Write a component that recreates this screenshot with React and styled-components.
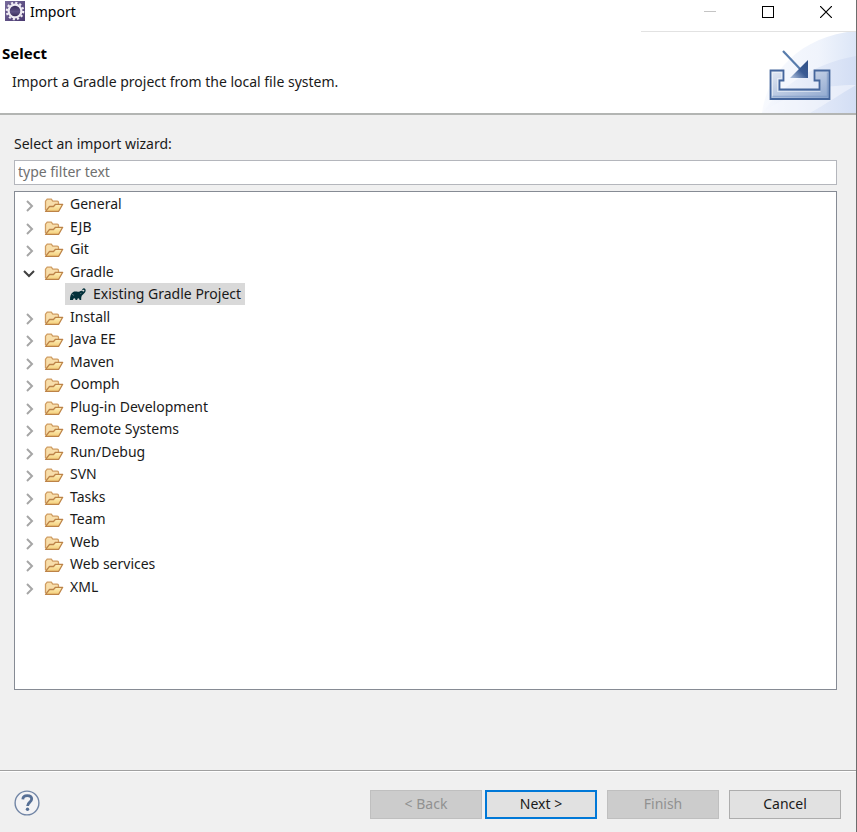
import React, { useState } from 'react';
import styled, { createGlobalStyle } from 'styled-components';

const GlobalStyle = createGlobalStyle`
  * {
    box-sizing: border-box;
  }

  body {
    margin: 0;
    background: #f0f0f0;
    color: #1a1a1a;
    font-family: 'Noto Sans', 'Noto Sans CJK KR', sans-serif;
    font-size: 14px;
    line-height: 22px;
  }

  button, input {
    font: inherit;
  }
`;

const Dialog = styled.div`
  display: flex;
  flex-direction: column;
  min-height: 100vh;
  border-right: 1px solid #6d6d6d;
`;

const TitleBar = styled.header`
  display: flex;
  align-items: flex-start;
  height: 31px;
  padding-left: 5px;
  background: #fff;
  color: #000;
`;

const WindowTitle = styled.span`
  flex: 1;
  margin-left: 5px;
  line-height: 24px;
`;

const WindowControls = styled.div`
  display: flex;
  height: 32px;
  padding: 0 1px 0 40px;
  border-bottom: 1px solid #e2e2e2;
  z-index: 1;
`;

const ControlButton = styled.button`
  width: 58px;
  padding: 0 0 7px;
  border: none;
  background: transparent;
  color: ${props => (props.disabled ? '#c4c4c4' : '#000')};

  svg {
    display: block;
    margin: 0 auto;
  }
`;

const Banner = styled.div`
  display: flex;
  justify-content: space-between;
  height: 84px;
  padding-left: 2px;
  border-bottom: 2px solid #b3b5b3;
  background: #fff;
`;

const BannerText = styled.div`
  padding-top: 10px;
`;

const BannerTitle = styled.h1`
  margin: 0;
  color: #000;
  font-size: 15px;
  font-weight: 700;
  line-height: 24px;
`;

const BannerMessage = styled.p`
  margin: 0;
  padding: 6px 0 0 10px;
`;

const Content = styled.main`
  display: flex;
  flex: 1;
  flex-direction: column;
  padding: 18px 19px 80px 14px;
`;

const FilterLabel = styled.label`
  margin-bottom: 5px;
`;

const FilterInput = styled.input`
  width: 100%;
  height: 25px;
  padding: 0 3px 2px;
  border: 1px solid #b4b6bc;
  border-radius: 0;
  outline: none;
  background: #fff;

  &::placeholder {
    color: #707070;
    opacity: 1;
  }
`;

const Tree = styled.ul`
  display: grid;
  flex: 1;
  grid-auto-rows: 22px 23px;
  align-content: start;
  margin: 6px 0 0;
  padding: 1px 0 0 7px;
  border: 1px solid #868b94;
  background: #fff;
  list-style: none;
`;

const TreeRow = styled.li`
  display: flex;
  align-items: center;
  padding-left: ${props => (props.$nested ? '43px' : '0')};
`;

const Toggle = styled.button`
  display: flex;
  align-items: center;
  justify-content: center;
  width: 14px;
  height: 20px;
  margin-right: 8px;
  padding: 4px 0 0;
  border: none;
  background: transparent;
`;

const ItemLabel = styled.span`
  display: flex;
  align-items: center;
  gap: ${props => (props.$selected ? '7px' : '6px')};
  padding: ${props => (props.$selected ? '0 4px' : '0')};
  background: ${props => (props.$selected ? '#d9d9d9' : 'transparent')};
`;

const Footer = styled.footer`
  display: flex;
  align-items: center;
  justify-content: space-between;
  height: 62px;
  padding: 6px 15px 0 14px;
  border-top: 1px solid #a0a0a0;
  box-shadow: inset 0 1px #fff;
`;

const HelpButton = styled.button`
  width: 26px;
  height: 30px;
  padding: 0 0 4px;
  border: none;
  background: transparent;

  svg {
    display: block;
  }
`;

const ButtonRow = styled.div`
  display: flex;
  gap: 10px;
`;

const ButtonPair = styled.div`
  display: flex;
  gap: 3px;
`;

const WizardButton = styled.button`
  width: 112px;
  height: 29px;
  padding: 0 0 2px;
  border: ${props => (props.$primary ? '2px solid #0078d7' : '1px solid #adadad')};
  background: #e1e1e1;
  color: #1a1a1a;

  &:disabled {
    border-color: #bfbfbf;
    background: #cccccc;
    color: #919191;
  }
`;

const EclipseIcon = () => (
  <svg width="20" height="22" viewBox="0 0 20 22">
    <defs>
      <linearGradient id="eclipseBg" x1="0" y1="0" x2="1" y2="1">
        <stop offset="0" stopColor="#776a9b" />
        <stop offset="1" stopColor="#493970" />
      </linearGradient>
      <linearGradient id="eclipseDisc" x1="0" y1="0" x2="0" y2="1">
        <stop offset="0" stopColor="#302451" />
        <stop offset="0.55" stopColor="#5d5184" />
        <stop offset="1" stopColor="#302451" />
      </linearGradient>
    </defs>
    <rect y="1" width="20" height="20" fill="url(#eclipseBg)" />
    <circle cx="10" cy="11" r="8.2" fill="none" stroke="#eeeaf2" strokeWidth="2.2" strokeDasharray="2.15 2.14" />
    <circle cx="10" cy="11" r="6.4" fill="url(#eclipseDisc)" stroke="#eeeaf2" strokeWidth="2.2" />
  </svg>
);

const ImportBannerIcon = () => (
  <svg width="94" height="82" viewBox="0 0 94 82" aria-hidden="true">
    <defs>
      <linearGradient id="swoosh" x1="0" y1="0" x2="1" y2="0">
        <stop offset="0" stopColor="#f7f9fe" />
        <stop offset="1" stopColor="#d3def4" />
      </linearGradient>
      <linearGradient id="swooshTop" x1="0" y1="0" x2="1" y2="0">
        <stop offset="0" stopColor="#f8fafe" />
        <stop offset="0.6" stopColor="#f0f4fc" />
        <stop offset="1" stopColor="#dce6f7" />
      </linearGradient>
      <linearGradient id="tray" x1="0" y1="0" x2="1" y2="1">
        <stop offset="0" stopColor="#e3e9f4" />
        <stop offset="0.5" stopColor="#b9c8e1" />
        <stop offset="1" stopColor="#8da6ce" />
      </linearGradient>
      <linearGradient id="arrowHead" x1="0" y1="1" x2="1" y2="0">
        <stop offset="0" stopColor="#b5c6e1" />
        <stop offset="0.5" stopColor="#3a5b94" />
        <stop offset="1" stopColor="#305087" />
      </linearGradient>
    </defs>
    <path d="M0 82C5 42 38 5 94 0V82Z" fill="url(#swooshTop)" />
    <path d="M0 82C17 58 48 33 94 25V82Z" fill="url(#swoosh)" />
    <path d="M0 82C30 60 62 54 94 54C80 62 64 73 48 82Z" fill="#f5f8fe" opacity="0.55" />
    <path
      d="M8.5 39.5h13v10h-4v9h40v-9h-5v-10h15v28.500h-59Z"
      fill="url(#tray)"
      stroke="#45669c"
      strokeWidth="1.8"
    />
    <path d="M10.500 65.500V41.500h9v6h-4v13h43" fill="none" stroke="#f5f7fb" strokeWidth="0.8" opacity="0.7" />
    <path d="M10.500 65.500h55v-24" fill="none" stroke="#6f8fc0" strokeWidth="1.4" opacity="0.5" />
    <path d="M21 20L40 40" fill="none" stroke="#587cac" strokeWidth="2.2" />
    <path d="M46 29V47H28Z" fill="url(#arrowHead)" />
  </svg>
);

const ChevronIcon = ({ open }) => (
  <svg width="12" height="12" viewBox="0 0 12 12">
    <path
      d={open ? 'M1 3L6 8L11 3' : 'M4 1L9 6L4 11'}
      fill="none"
      stroke={open ? '#404040' : '#a6a6a6'}
      strokeWidth="2"
    />
  </svg>
);

const FolderIcon = () => (
  <svg width="20" height="18" viewBox="0 0 20 18">
    <defs>
      <linearGradient id="folderFront" x1="0" y1="0" x2="0" y2="1">
        <stop offset="0" stopColor="#fff2bd" />
        <stop offset="1" stopColor="#f3cd78" />
      </linearGradient>
    </defs>
    <path
      d="M1.500 15V6.200L3.200 4.200H7.300L8.800 6.200H13.200Q14.500 6.200 14.500 7.500V9"
      fill="#f8deaa"
      stroke="#cf9c60"
      strokeWidth="1.3"
    />
    <path
      d="M1.500 16.300L5.500 11.500H9.500L11.500 9.300H18.700L14.700 16.300Z"
      fill="url(#folderFront)"
      stroke="#bd8347"
      strokeWidth="1.3"
      strokeLinejoin="round"
    />
  </svg>
);

const GradleIcon = () => (
  <svg width="17" height="14" viewBox="0 0 17 14">
    <path
      d="M1 13C.9 9 2 6.200 4.200 4.900c1.700-.9 3.500-.3 4.700-.2 1.500.2 2.300-.7 3.500-1 1.200 0 1.700 1.100 2.500.7.8-.4.5-1.800-.4-1.600-.6.1-.7.7-1.200.4-.4-.9.6-2 1.800-1.900 1.500.2 1.900 2 1.300 3.400-.7 1.700-2.500 2.400-3.500 3.900-.7 1.100-.7 2.500-.7 4.400h-1.700c0-1.100-.4-1.800-1.100-1.800-.9 0-1.100.8-1.200 1.800H6.500c0-1.100-.4-1.800-1.200-1.800-.8 0-1.100.8-1.200 1.800Z"
      fill="#02303a"
    />
    <path d="M3 7c.6.9 1.200 1.300 2.100 1.100M11.200 6.100c.3.5.8.6 1.200.1" fill="none" stroke="#a6b6ba" strokeWidth="0.6" />
  </svg>
);

const HelpIcon = () => (
  <svg width="26" height="26" viewBox="0 0 26 26">
    <circle cx="13" cy="13" r="11.9" fill="#f3f3f5" stroke="#7185a5" strokeWidth="1.4" />
    <path
      d="M8.8 9.4C9 6.9 10.8 5.7 13.3 5.7C16 5.7 17.7 7.1 17.7 9.1C17.7 12.2 13.6 12.2 13.6 16"
      fill="none"
      stroke="#566f95"
      strokeWidth="2.8"
    />
    <circle cx="13.5" cy="19.3" r="1.7" fill="#566f95" />
  </svg>
);

const categories = [
  'General',
  'EJB',
  'Git',
  'Gradle',
  'Install',
  'Java EE',
  'Maven',
  'Oomph',
  'Plug-in Development',
  'Remote Systems',
  'Run/Debug',
  'SVN',
  'Tasks',
  'Team',
  'Web',
  'Web services',
  'XML',
];

const App = () => {
  const [filter, setFilter] = useState('');
  const [gradleOpen, setGradleOpen] = useState(true);

  const visible = categories.filter(name => name.toLowerCase().includes(filter.toLowerCase()));

  return (
    <>
      <GlobalStyle />
      <Dialog>
        <TitleBar>
          <EclipseIcon />
          <WindowTitle>Import</WindowTitle>
          <WindowControls>
            <ControlButton disabled aria-label="Minimize">
              <svg width="12" height="12" viewBox="0 0 12 12">
                <path d="M0 5.5h12" stroke="currentColor" />
              </svg>
            </ControlButton>
            <ControlButton aria-label="Maximize">
              <svg width="12" height="12" viewBox="0 0 12 12">
                <rect x="0.5" y="0.5" width="11" height="11" fill="none" stroke="currentColor" />
              </svg>
            </ControlButton>
            <ControlButton aria-label="Close">
              <svg width="12" height="12" viewBox="0 0 12 12">
                <path d="M0 0l12 12M12 0L0 12" stroke="currentColor" strokeWidth="1.2" />
              </svg>
            </ControlButton>
          </WindowControls>
        </TitleBar>

        <Banner>
          <BannerText>
            <BannerTitle>Select</BannerTitle>
            <BannerMessage>Import a Gradle project from the local file system.</BannerMessage>
          </BannerText>
          <ImportBannerIcon />
        </Banner>

        <Content>
          <FilterLabel htmlFor="filter">Select an import wizard:</FilterLabel>
          <FilterInput
            id="filter"
            type="text"
            placeholder="type filter text"
            value={filter}
            onChange={e => setFilter(e.target.value)}
          />
          <Tree>
            {visible.map(name => {
              const open = name === 'Gradle' && gradleOpen;
              return (
                <React.Fragment key={name}>
                  <TreeRow>
                    <Toggle
                      aria-label={`Toggle ${name}`}
                      aria-expanded={open}
                      onClick={() => name === 'Gradle' && setGradleOpen(!gradleOpen)}
                    >
                      <ChevronIcon open={open} />
                    </Toggle>
                    <ItemLabel>
                      <FolderIcon />
                      {name}
                    </ItemLabel>
                  </TreeRow>
                  {open && (
                    <TreeRow $nested>
                      <ItemLabel $selected>
                        <GradleIcon />
                        Existing Gradle Project
                      </ItemLabel>
                    </TreeRow>
                  )}
                </React.Fragment>
              );
            })}
          </Tree>
        </Content>

        <Footer>
          <HelpButton aria-label="Help">
            <HelpIcon />
          </HelpButton>
          <ButtonRow>
            <ButtonPair>
              <WizardButton disabled>&lt; Back</WizardButton>
              <WizardButton $primary>Next &gt;</WizardButton>
            </ButtonPair>
            <WizardButton disabled>Finish</WizardButton>
            <WizardButton>Cancel</WizardButton>
          </ButtonRow>
        </Footer>
      </Dialog>
    </>
  );
};

export default App;
